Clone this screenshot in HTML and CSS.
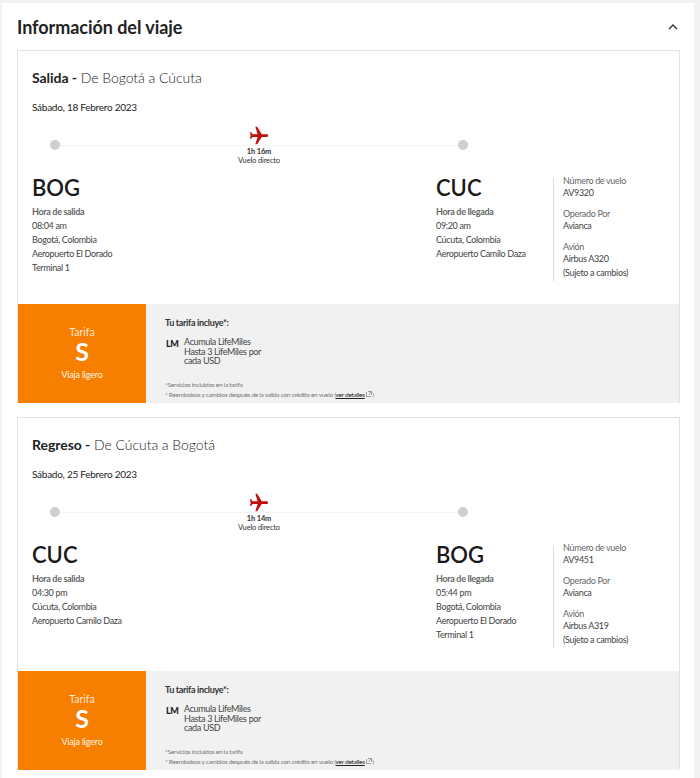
FILE: index.html
```html
<!DOCTYPE html>
<html lang="es">

<head>
    <meta charset="UTF-8">
    <meta name="viewport" content="width=device-width, initial-scale=1.0">
    <title>Información del viaje</title>
    <link rel="stylesheet" href="styles.css">
</head>

<body>
    <div class="panel">
        <div class="panel-head">
            <h1>Información del viaje</h1>
            <svg class="chevron" width="10" height="6" viewBox="0 0 10 6"><path d="M1 5l4-4 4 4" fill="none" stroke="#333" stroke-width="1.4"/></svg>
        </div>

        <section class="card">
            <div class="card-body">
                <h2><b>Salida -</b> De Bogotá a Cúcuta</h2>
                <p class="date">Sábado, 18 Febrero 2023</p>
                <div class="route">
                    <span class="dot"></span>
                    <div class="route-mid">
                        <svg class="plane" width="22" height="22" viewBox="0 0 24 24"><path transform="rotate(90 12 12)" d="M21 16v-2l-8-5V3.5c0-.83-.67-1.5-1.5-1.5S10 2.67 10 3.5V9l-8 5v2l8-2.5V19l-2 1.5V22l3.5-1 3.5 1v-1.5L13 19v-5.5l8 2.5z" fill="#c20f0f"/></svg>
                        <strong>1h 16m</strong>
                        <span>Vuelo directo</span>
                    </div>
                    <span class="dot"></span>
                </div>
                <div class="legs">
                    <div class="leg leg-from">
                        <div class="code">BOG</div>
                        <div class="label">Hora de salida</div>
                        <div>08:04 am</div>
                        <div>Bogotá, Colombia</div>
                        <div>Aeropuerto El Dorado</div>
                        <div>Terminal 1</div>
                    </div>
                    <div class="leg leg-to">
                        <div class="code">CUC</div>
                        <div class="label">Hora de llegada</div>
                        <div>09:20 am</div>
                        <div>Cúcuta, Colombia</div>
                        <div>Aeropuerto Camilo Daza</div>
                    </div>
                    <div class="flight">
                        <div class="flight-item"><span>Número de vuelo</span>AV9320</div>
                        <div class="flight-item"><span>Operado Por</span>Avianca</div>
                        <div class="flight-item"><span>Avión</span>Airbus A320<span class="flight-note">(Sujeto a cambios)</span></div>
                    </div>
                </div>
            </div>
            <div class="fare">
                <div class="fare-tile">
                    <span>Tarifa</span>
                    <b>S</b>
                    <em>Viaja ligero</em>
                </div>
                <div class="fare-info">
                    <h3>Tu tarifa incluye*:</h3>
                    <div class="perk">
                        <span class="perk-icon">LM</span>
                        <p>Acumula LifeMiles<br>Hasta 3 LifeMiles por<br>cada USD</p>
                    </div>
                    <div class="notes">
                        <div>*Servicios incluidos en la tarifa</div>
                        <div>* Reembolsos y cambios después de la salida con crédito en vuelo (<a href="#">ver detalles</a> <svg width="6" height="6" viewBox="0 0 6 6"><path d="M.5 1v4.5H5M2 .5h3.5V4M5.500 .5L2.500 3.500" fill="none" stroke="#777" stroke-width=".7"/></svg>)</div>
                    </div>
                </div>
            </div>
        </section>

        <section class="card">
            <div class="card-body">
                <h2><b>Regreso -</b> De Cúcuta a Bogotá</h2>
                <p class="date">Sábado, 25 Febrero 2023</p>
                <div class="route">
                    <span class="dot"></span>
                    <div class="route-mid">
                        <svg class="plane" width="22" height="22" viewBox="0 0 24 24"><path transform="rotate(90 12 12)" d="M21 16v-2l-8-5V3.5c0-.83-.67-1.5-1.5-1.5S10 2.67 10 3.5V9l-8 5v2l8-2.5V19l-2 1.5V22l3.5-1 3.5 1v-1.5L13 19v-5.5l8 2.5z" fill="#c20f0f"/></svg>
                        <strong>1h 14m</strong>
                        <span>Vuelo directo</span>
                    </div>
                    <span class="dot"></span>
                </div>
                <div class="legs">
                    <div class="leg leg-from">
                        <div class="code">CUC</div>
                        <div class="label">Hora de salida</div>
                        <div>04:30 pm</div>
                        <div>Cúcuta, Colombia</div>
                        <div>Aeropuerto Camilo Daza</div>
                    </div>
                    <div class="leg leg-to">
                        <div class="code">BOG</div>
                        <div class="label">Hora de llegada</div>
                        <div>05:44 pm</div>
                        <div>Bogotá, Colombia</div>
                        <div>Aeropuerto El Dorado</div>
                        <div>Terminal 1</div>
                    </div>
                    <div class="flight">
                        <div class="flight-item"><span>Número de vuelo</span>AV9451</div>
                        <div class="flight-item"><span>Operado Por</span>Avianca</div>
                        <div class="flight-item"><span>Avión</span>Airbus A319<span class="flight-note">(Sujeto a cambios)</span></div>
                    </div>
                </div>
            </div>
            <div class="fare">
                <div class="fare-tile">
                    <span>Tarifa</span>
                    <b>S</b>
                    <em>Viaja ligero</em>
                </div>
                <div class="fare-info">
                    <h3>Tu tarifa incluye*:</h3>
                    <div class="perk">
                        <span class="perk-icon">LM</span>
                        <p>Acumula LifeMiles<br>Hasta 3 LifeMiles por<br>cada USD</p>
                    </div>
                    <div class="notes">
                        <div>*Servicios incluidos en la tarifa</div>
                        <div>* Reembolsos y cambios después de la salida con crédito en vuelo (<a href="#">ver detalles</a> <svg width="6" height="6" viewBox="0 0 6 6"><path d="M.5 1v4.5H5M2 .5h3.5V4M5.500 .5L2.500 3.500" fill="none" stroke="#777" stroke-width=".7"/></svg>)</div>
                    </div>
                </div>
            </div>
        </section>
    </div>
</body>

</html>
```

FILE: styles.css
```css
body {
    font-family: Lato, "Open Sans", sans-serif;
    margin: 0;
    padding: 0;
    height: 778px;
    overflow: hidden;
    background-color: #f2f2f2;
    color: #333;
    font-size: 9px;
}

.panel {
    background-color: #ffffff;
    margin: 3px 6px 0 2px;
    padding: 0 14px 0 15px;
    height: 775px;
}

.panel-head {
    display: flex;
    justify-content: space-between;
    align-items: center;
    height: 47px;
}

.panel-head h1 {
    margin: 0;
    font-size: 18px;
    font-weight: 700;
    letter-spacing: -0.05px;
    color: #222;
}

.chevron {
    margin-right: 2px;
}

.card {
    border: 1px solid #e2e2e2;
    border-bottom: none;
    margin-bottom: 14px;
}

.card-body {
    height: 253px;
    padding: 0 14px;
}

.card-body h2 {
    margin: 0;
    padding-top: 18px;
    font-size: 14px;
    line-height: 18px;
    font-weight: 300;
    letter-spacing: -0.05px;
    color: #222;
}

.card-body h2 b {
    font-weight: 700;
    color: #222;
}

.date {
    margin: 13px 0 0;
    font-size: 10px;
    line-height: 14px;
    letter-spacing: -0.26px;
    color: #222;
}

.route {
    display: flex;
    justify-content: space-between;
    align-items: flex-start;
    width: 418px;
    margin: 6px 0 0 18px;
    background: linear-gradient(#f3f3f3, #f3f3f3) no-repeat 0 25px / 100% 1px;
    height: 48px;
}

.dot {
    width: 10px;
    height: 10px;
    margin-top: 20px;
    border-radius: 50%;
    background-color: #cfcfcf;
}

.route-mid {
    display: flex;
    flex-direction: column;
    align-items: center;
    padding-top: 5px;
    font-size: 7.5px;
    line-height: 9px;
    letter-spacing: -0.15px;
    color: #333;
}

.route-mid strong {
    font-weight: 700;
}

.legs {
    display: flex;
    margin-top: 5px;
    line-height: 14px;
    font-size: 9px;
    letter-spacing: -0.33px;
    color: #444;
}

.code {
    font-size: 22px;
    line-height: 30px;
    margin-bottom: 2px;
    letter-spacing: 0;
    color: #1a1a1a;
    font-weight: 600;
}

.label {
    color: #666;
    font-weight: 700;
}

.leg-from {
    width: 404px;
}

.leg-to {
    width: 117px;
}

.flight {
    width: 90px;
    margin-top: 5px;
    height: 103px;
    padding-left: 9px;
    border-left: 1px solid #dcdcdc;
    line-height: 12px;
}

.flight-item {
    margin-bottom: 9px;
}

.flight-item:first-child {
    margin-top: -3px;
}

.flight-item span {
    display: block;
    color: #666;
}

.flight-item .flight-note {
    margin-top: 2px;
    color: #444;
}

.fare {
    display: flex;
    height: 99px;
}

.fare-tile {
    display: flex;
    flex-direction: column;
    align-items: center;
    width: 128px;
    padding-top: 22px;
    box-sizing: border-box;
    background-color: #f77f00;
    color: #ffffff;
}

.fare-tile span {
    font-size: 10.5px;
    line-height: 12px;
    opacity: 0.8;
}

.fare-tile b {
    font-size: 25px;
    line-height: 24px;
    margin-top: 1px;
}

.fare-tile em {
    font-style: normal;
    font-size: 9px;
    line-height: 12px;
    margin-top: 6px;
    letter-spacing: -0.2px;
    opacity: 0.9;
}

.fare-info {
    flex: 1;
    background-color: #f1f1f1;
    padding: 13px 0 0 19px;
}

.fare-info h3 {
    margin: 0;
    font-size: 9px;
    line-height: 12px;
    font-weight: 700;
    letter-spacing: -0.33px;
    color: #333;
}

.perk {
    display: flex;
    margin-top: 8px;
}

.perk-icon {
    width: 18px;
    margin-left: 1px;
    font-size: 9px;
    line-height: 13px;
    font-weight: 900;
    letter-spacing: -0.5px;
    color: #222;
}

.perk p {
    margin: 0;
    font-size: 9px;
    line-height: 9.500px;
    letter-spacing: -0.33px;
    color: #444;
}

.notes {
    margin-top: 14px;
    font-size: 6.500px;
    line-height: 10px;
    letter-spacing: -0.28px;
    color: #777;
}

.notes a {
    color: #222;
    text-decoration: underline;
}
```
